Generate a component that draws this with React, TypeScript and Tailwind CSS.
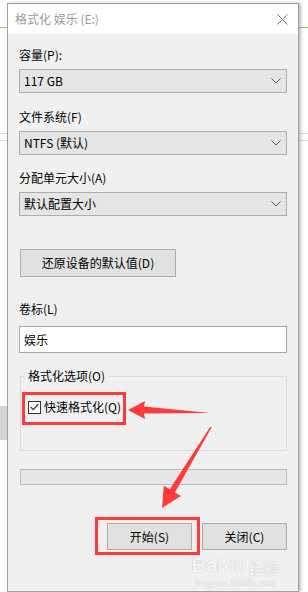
import React from 'react';

const FONT = { fontFamily: '"Segoe UI", "Noto Sans CJK SC", "Noto Sans", sans-serif' };

function Chevron() {
  return (
    <svg width="10" height="6" viewBox="0 0 10 6" className="shrink-0">
      <path d="M0.5 0.5 L5 5 L9.5 0.5" fill="none" stroke="#555" strokeWidth="1" />
    </svg>
  );
}

function Select({ value }: { value: string }) {
  return (
    <div className="h-[24px] w-[268px] border border-[#adadad] bg-[#e5e5e5] flex items-center justify-between pl-[4px] pr-[5px] text-[12px] text-black">
      <span>{value}</span>
      <Chevron />
    </div>
  );
}

function Label({ text, mt }: { text: string; mt: string }) {
  return <div className={`${mt} h-[16px] leading-[16px] text-[12px] text-black`}>{text}</div>;
}

export default function App() {
  return (
    <div className="relative w-[308px] h-[592px] bg-white overflow-hidden" style={FONT}>
      {/* desktop behind the dialog */}
      <div className="absolute left-0 top-[27px] w-[308px] h-px bg-[#8fcf5a]" />
      <div className="absolute left-0 top-[133px] w-[308px] h-px bg-[#dcdcdc]" />
      <div className="absolute left-0 top-[140px] w-[308px] h-px bg-[#dcdcdc]" />
      <div className="absolute left-0 top-[406px] w-[8px] h-[34px] bg-[#d6d6d6]" />

      <div className="relative ml-[7px] mt-[3px] w-[292px] h-[589px] border border-[#a0a0a0] bg-[#f0f0f0] flex flex-col shadow-[2px_0_3px_rgba(0,0,0,0.25)]">
        <div className="h-[30px] bg-white flex items-center justify-between pl-[7px] pr-[10px]">
          <span className="text-[12px] text-[#9a9a9a]">格式化 娱乐 (E:)</span>
          <svg width="11" height="11" viewBox="0 0 11 11">
            <path d="M0.5 0.5 L10.5 10.5 M10.5 0.5 L0.5 10.5" stroke="#7a7a7a" strokeWidth="1" />
          </svg>
        </div>

        <div className="flex flex-col px-[11px]">
          <Label text="容量(P):" mt="mt-[13px]" />
          <div className="mt-[6px]"><Select value="117 GB" /></div>
          <Label text="文件系统(F)" mt="mt-[16px]" />
          <div className="mt-[6px]"><Select value="NTFS (默认)" /></div>
          <Label text="分配单元大小(A)" mt="mt-[15px]" />
          <div className="mt-[6px]"><Select value="默认配置大小" /></div>

          <div className="mt-[33px] ml-[1px] h-[28px] w-[156px] border border-[#adadad] bg-[#e1e1e1] flex items-center justify-center text-[12px] text-black">
            还原设备的默认值(D)
          </div>

          <Label text="卷标(L)" mt="mt-[24px]" />
          <div className="mt-[9px] h-[27px] w-[268px] border border-[#a8a8a8] bg-white flex items-center pl-[4px] text-[12px] text-black">
            娱乐
          </div>

          <div className="relative mt-[23px] ml-[1px] h-[75px] w-[267px] border border-[#dcdcdc]">
            <div className="absolute left-[4px] top-[-9px] px-[3px] bg-[#f0f0f0] h-[16px] leading-[16px] text-[12px] text-black">格式化选项(O)</div>
            <div className="flex items-center gap-[3px] mt-[22px] ml-[7px]">
              <div className="w-[13px] h-[13px] border border-[#333] bg-white flex items-center justify-center">
                <svg width="9" height="8" viewBox="0 0 9 8">
                  <path d="M0.8 4 L3.3 6.6 L8.3 1" fill="none" stroke="#333" strokeWidth="1.2" />
                </svg>
              </div>
              <span className="text-[12px] leading-[16px] text-black">快速格式化(Q)</span>
            </div>
          </div>

          <div className="mt-[18px] ml-[1px] h-[16px] w-[267px] border border-[#bcbcbc] bg-[#e6e6e6]" />

          <div className="mt-[38px] flex justify-end gap-[10px]">
            <div className="h-[27px] w-[85px] border border-[#adadad] bg-[#e1e1e1] flex items-center justify-center text-[12px] text-black">开始(S)</div>
            <div className="h-[27px] w-[85px] border border-[#adadad] bg-[#e1e1e1] flex items-center justify-center text-[12px] text-black">关闭(C)</div>
          </div>

          <div className="mt-[5px] self-end mr-[8px] flex flex-col items-center text-[#f4f4f4] [text-shadow:0_0_1px_#b8b8b8]">
            <div className="flex items-end leading-none">
              <span className="text-[20px] font-bold" style={{ fontFamily: '"Liberation Sans", sans-serif' }}>Bai</span>
              <span className="text-[18px] font-bold ml-[1px]" style={{ fontFamily: '"Liberation Sans", sans-serif' }}>du</span>
              <span className="text-[15px] font-bold ml-[3px]">经验</span>
            </div>
            <span className="text-[11px] leading-[14px] italic" style={{ fontFamily: '"Liberation Serif", serif' }}>jingyan.baidu.com</span>
          </div>
        </div>
      </div>

      {/* annotations */}
      <svg className="absolute left-0 top-0 pointer-events-none" width="308" height="592" viewBox="0 0 308 592">
        <rect x="23.5" y="393.5" width="101" height="30" fill="none" stroke="#ff3a3a" strokeWidth="3" />
        <rect x="96.5" y="518.5" width="102" height="35" fill="none" stroke="#ff3a3a" strokeWidth="3" />
        <polygon points="128,410 145,401 144,406.5 210,413 144,413.5 145,419" fill="#ff3a3a" />
        <polygon points="162,508 163.8,485.7 169.7,489.3 210.5,426.5 211.5,427.5 174.9,492.5 180.9,496.1" fill="#ff3a3a" />
      </svg>
    </div>
  );
}
